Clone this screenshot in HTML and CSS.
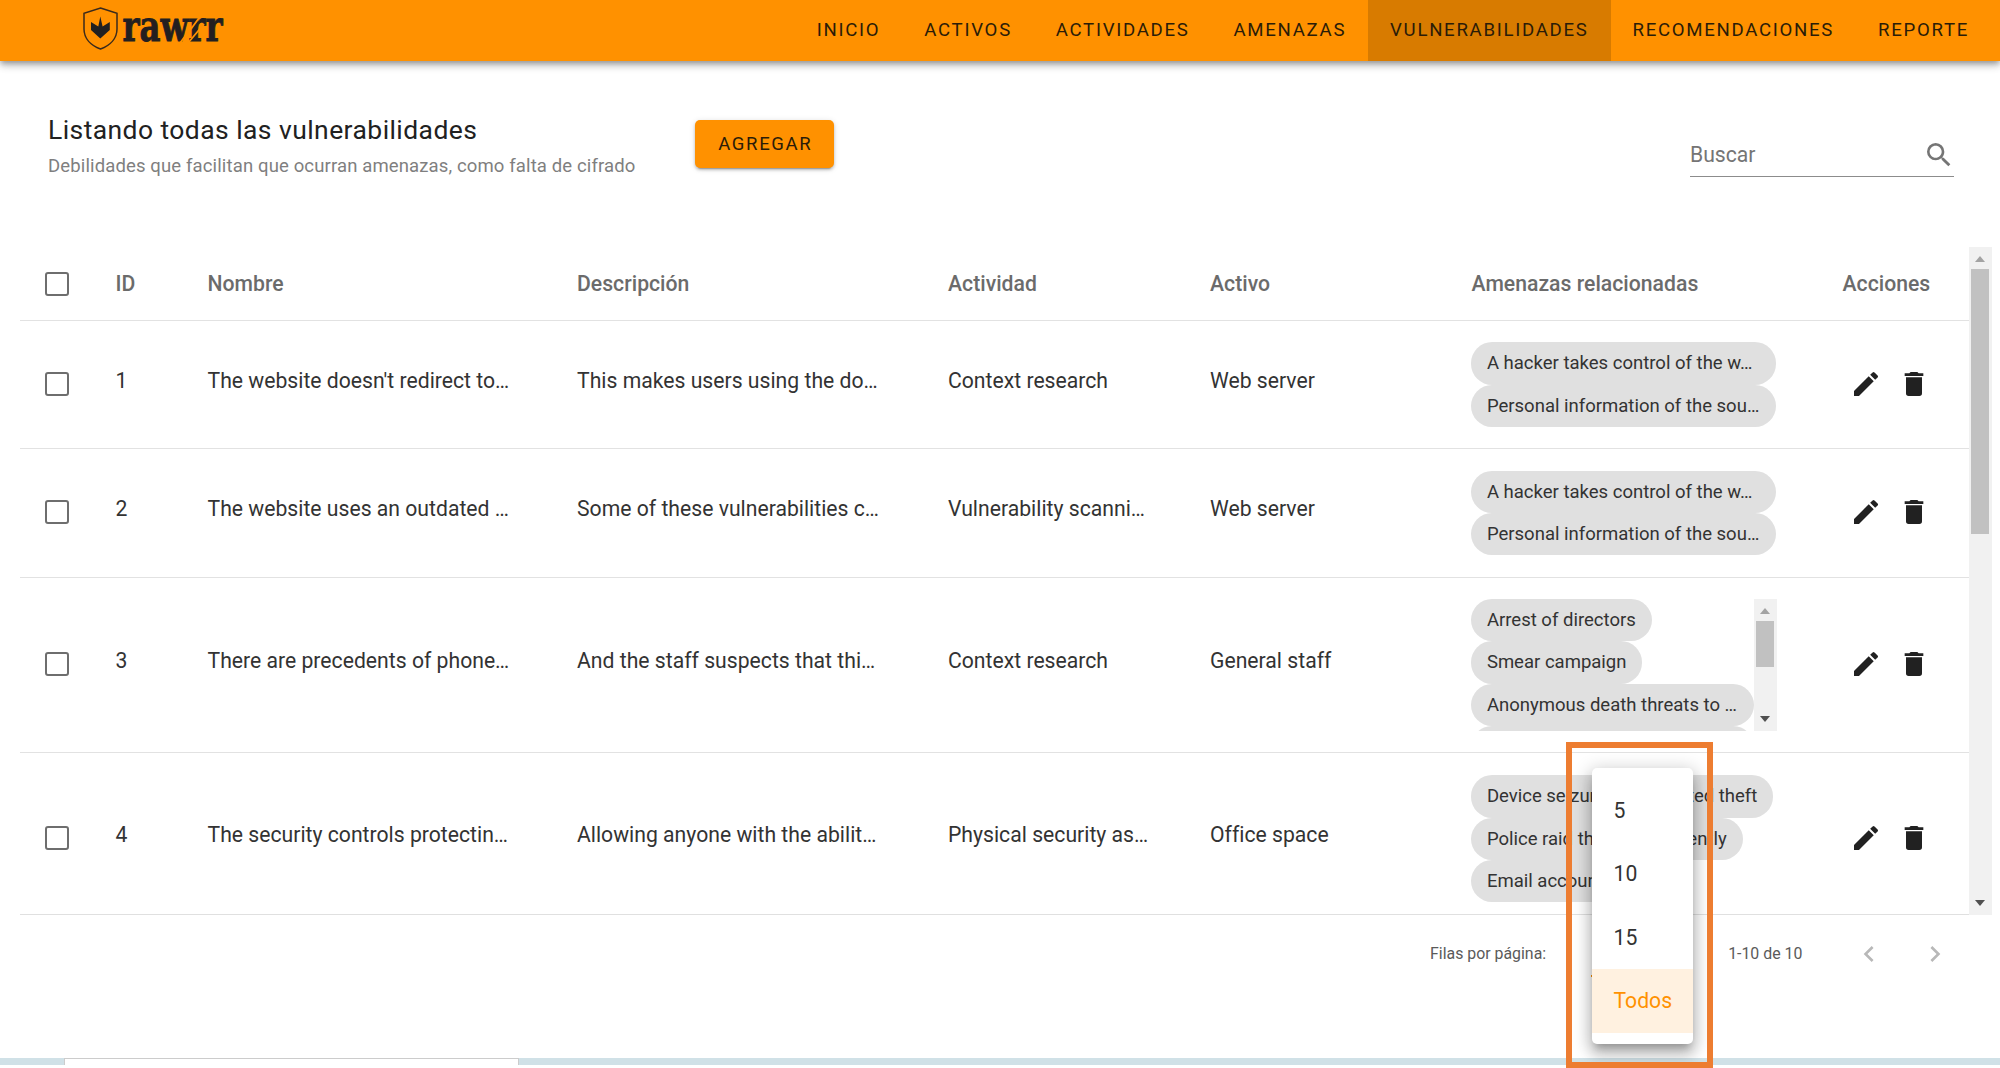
FILE: index.html
```html
<!DOCTYPE html>
<html lang="es">
<head>
<meta charset="utf-8">
<title>Vulnerabilidades</title>
<link rel="stylesheet" href="styles.css">
</head>
<body>
<svg class="defs" aria-hidden="true">
  <symbol id="pencil" viewBox="0 0 24 24"><path d="M3 17.25V21h3.75L17.81 9.94l-3.75-3.75L3 17.25zM20.71 7.04a1 1 0 0 0 0-1.41l-2.34-2.34a1 1 0 0 0-1.41 0l-1.83 1.83 3.75 3.75 1.83-1.83z"/></symbol>
  <symbol id="trash" viewBox="0 0 24 24"><path d="M19 4h-3.5l-1-1h-5l-1 1H5v2h14M6 19a2 2 0 0 0 2 2h8a2 2 0 0 0 2-2V7H6v12z"/></symbol>
  <symbol id="chevron" viewBox="0 0 24 24"><path d="M15.41 16.58L10.83 12l4.58-4.59L14 6l-6 6 6 6 1.41-1.42z"/></symbol>
</svg>
<header class="topbar">
  <svg class="logo" width="150" height="57" viewBox="0 -5 150 57" role="img" aria-label="rawrr">
    <path class="shield" d="M17.5 3L34 8.3V24C34 33.500 27 40.500 17.500 44C8 40.500 1 33.500 1 24V8.300Z"/>
    <path d="M17.300 11.500L19.600 21.500L26.800 17V25L17.300 33.500L8 25V17L15.300 21.500Z"/>
    <text class="wordmark" x="39.5" y="36" textLength="100" lengthAdjust="spacingAndGlyphs">rawrr</text>
    <path class="cut" d="M97 38L109 22M108 24L116 13M105 38L121 19"/>
  </svg>
  <nav class="menu">
    <a>INICIO</a><a>ACTIVOS</a><a>ACTIVIDADES</a><a>AMENAZAS</a><a class="active">VULNERABILIDADES</a><a>RECOMENDACIONES</a><a>REPORTE</a>
  </nav>
</header>
<main>
  <section class="toolbar">
    <div class="heading">
      <h1>Listando todas las vulnerabilidades</h1>
      <p>Debilidades que facilitan que ocurran amenazas, como falta de cifrado</p>
    </div>
    <button class="add">AGREGAR</button>
    <label class="search"><span>Buscar</span>
      <svg width="32" height="32" viewBox="0 0 24 24"><path d="M9.500 3A6.500 6.500 0 0 1 16 9.500c0 1.610-.59 3.090-1.560 4.230l.27.27h.79l5 5-1.500 1.500-5-5v-.79l-.27-.27A6.516 6.516 0 0 1 9.500 16a6.500 6.500 0 0 1 0-13m0 2C7 5 5 7 5 9.500S7 14 9.500 14 14 12 14 9.500 12 5 9.500 5z"/></svg>
    </label>
  </section>
  <section class="table-wrap">
    <div class="table">
      <div class="row head"><i class="check"></i><span>ID</span><span>Nombre</span><span>Descripción</span><span>Actividad</span><span>Activo</span><span>Amenazas relacionadas</span><span>Acciones</span></div>
      <div class="row"><i class="check"></i><span>1</span><span>The website doesn't redirect to…</span><span>This makes users using the do…</span><span>Context research</span><span>Web server</span>
        <div class="chips"><b class="full">A hacker takes control of the w…</b><b class="full">Personal information of the sou…</b></div>
        <div class="actions"><svg><use href="#pencil"/></svg><svg><use href="#trash"/></svg></div></div>
      <div class="row"><i class="check"></i><span>2</span><span>The website uses an outdated …</span><span>Some of these vulnerabilities c…</span><span>Vulnerability scanni…</span><span>Web server</span>
        <div class="chips"><b class="full">A hacker takes control of the w…</b><b class="full">Personal information of the sou…</b></div>
        <div class="actions"><svg><use href="#pencil"/></svg><svg><use href="#trash"/></svg></div></div>
      <div class="row tall"><i class="check"></i><span>3</span><span>There are precedents of phone…</span><span>And the staff suspects that thi…</span><span>Context research</span><span>General staff</span>
        <div class="scrollbox"><div class="chips"><b>Arrest of directors</b><b>Smear campaign</b><b class="full">Anonymous death threats to …</b><b class="full"></b></div>
          <div class="bar"><i class="up"></i><i class="thumb"></i><i class="down"></i></div></div>
        <div class="actions"><svg><use href="#pencil"/></svg><svg><use href="#trash"/></svg></div></div>
      <div class="row last"><i class="check"></i><span>4</span><span>The security controls protectin…</span><span>Allowing anyone with the abilit…</span><span>Physical security as…</span><span>Office space</span>
        <div class="chips"><b>Device seizure and targeted theft</b><b>Police raid the office violently</b><b class="email">Email accounts hacked</b></div>
        <div class="actions"><svg><use href="#pencil"/></svg><svg><use href="#trash"/></svg></div></div>
    </div>
    <div class="bar main-bar"><i class="up"></i><i class="thumb"></i><i class="down"></i></div>
  </section>
  <footer class="pager">
    <span>Filas por página:</span>
    <div class="select"></div>
    <span class="range">1-10 de 10</span>
    <svg><use href="#chevron"/></svg>
    <svg class="next"><use href="#chevron"/></svg>
  </footer>
</main>
<div class="taskbar"><div class="taskbar-box"></div></div>
<div class="options"><div>5</div><div>10</div><div>15</div><div class="selected">Todos</div></div>
<div class="highlight"></div>
</body>
</html>
```
FILE: styles.css
```css
* { box-sizing: border-box; }
body {
  margin: 0;
  width: 2000px;
  height: 1068px;
  overflow: hidden;
  position: relative;
  display: flex;
  flex-direction: column;
  background: #fff;
  color: #333;
  font: 21.17px/28px Roboto, sans-serif;
}
.defs { position: absolute; width: 0; height: 0; }
svg { fill: #212121; flex: none; }

.topbar {
  flex: none;
  height: 60.5px;
  padding: 0 9px 0 83px;
  display: flex;
  justify-content: space-between;
  background: #ff9100;
  box-shadow: 0 3px 5px -1px rgba(0,0,0,.25), 0 5px 7px rgba(0,0,0,.16), 0 1px 13px rgba(0,0,0,.12);
}
.shield { fill: none; stroke: #3a2a1c; stroke-width: 1.500px; }
.wordmark { font: bold 42px "DejaVu Serif", serif; fill: #231f20; stroke: #231f20; stroke-width: .9px; }
.cut { stroke: #ff9100; stroke-width: 1.8px; fill: none; }
.menu { display: flex; }
.menu a {
  padding: 0 22px 0 21.9px;
  font-size: 18.6px;
  line-height: 60px;
  letter-spacing: 1.720px;
  color: #2b1c08;
}
.menu .active { background: #d87b00; }

main { flex: none; height: 997.5px; }
.toolbar { height: 186.5px; display: flex; align-items: flex-start; padding: 0 46px 0 48px; }
.heading { width: 647px; padding-top: 51.5px; }
h1 { margin: 0; font-size: 26.46px; line-height: 36px; font-weight: 400; letter-spacing: .44px; color: #212121; }
p { margin: 3px 0 0; font-size: 18.52px; line-height: 30px; letter-spacing: .13px; color: #7f7f7f; white-space: nowrap; }
.add {
  width: 139px;
  height: 48px;
  margin-top: 59.5px;
  padding: 0 0 0 1.600px;
  border: 0;
  border-radius: 5px;
  background: #ff9100;
  box-shadow: 0 4px 1px -3px rgba(0,0,0,.2), 0 2px 3px rgba(0,0,0,.2), 0 1px 6px rgba(0,0,0,.12);
  color: #2b1c08;
  font: 18.52px Roboto, sans-serif;
  letter-spacing: 1.654px;
}
.search {
  width: 264px;
  height: 43px;
  margin: 73.5px 0 0 auto;
  display: flex;
  justify-content: space-between;
  border-bottom: 1px solid #8c8c8c;
  color: #757575;
  line-height: 41px;
}
.search svg { fill: #757575; margin: 5px -1px 0 0; }

.table-wrap { height: 667.5px; padding: 0 8px 0 20px; display: flex; }
.table { width: 1949px; height: 667.500px; overflow: hidden; border-bottom: 1.500px solid #e0e0e0; }
.row {
  height: 128.3px;
  display: grid;
  grid-template-columns: 95px 92px 369.500px 371px 262px 261.500px 371px 1fr;
  align-items: center;
  border-bottom: 1.500px solid #e2e2e2;
  white-space: nowrap;
}
.row > span { padding: 0 0 7px .5px; letter-spacing: .01px; }
.row > .check { margin: 0 0 2px 25px; }
.row.head { height: 74px; color: #6b6b6b; }
.row.head > span { padding-bottom: 0; font-weight: 500; letter-spacing: .03px; }
.row.head > .check { margin-bottom: 0; }
.row.tall { height: 175.600px; }
.row.last { height: 171px; border: 0; }
.check { width: 24px; height: 24px; border: 2.500px solid #6e6e6e; border-radius: 3px; }
.chips { display: flex; flex-direction: column; align-items: flex-start; width: 305px; }
.chips b {
  height: 42.33px;
  padding: 0 15.9px;
  border-radius: 21.2px;
  background: #e0e0e0;
  font-size: 18.52px;
  font-weight: 400;
  line-height: 43px;
}
.chips .full { width: 100%; }
.chips .email { width: 222px; }
.scrollbox { width: 305.500px; height: 132px; display: flex; overflow: hidden; }
.scrollbox .chips { width: 283px; flex: none; }
.scrollbox b { flex: none; }
.bar { width: 22.500px; background: #f1f1f1; display: flex; flex-direction: column; align-items: center; flex: none; }
.bar .up, .bar .down { width: 0; height: 0; border: 5px solid transparent; border-top: 0; border-bottom: 6px solid #a3a3a3; }
.bar .up { margin: 9px 0 7px; }
.bar .down { margin: auto 0 9px; border-top: 6px solid #505050; border-bottom: 0; }
.thumb { width: 18px; height: 46px; background: #c1c1c1; }
.main-bar .thumb { height: 265px; }
.actions { display: flex; gap: 15.500px; padding: 0 0 2px 8px; }
.actions svg { width: 32px; height: 32px; }

.pager { display: flex; align-items: center; height: 78px; padding-left: 1430px; font-size: 15.880px; color: #5a5a5a; }
.select { width: 101px; height: 30px; margin-left: 45px; align-self: flex-end; border-bottom: 2.500px solid #ff9100; margin-bottom: 16px; }
.range { margin-left: 36px; width: 125px; }
.pager svg { width: 32px; height: 32px; fill: #b8b8b8; }
.pager .next { transform: rotate(180deg); margin-left: 34px; }

.taskbar { height: 7px; background: #d0e1e7; padding-left: 64px; flex: none; }
.taskbar-box { width: 455px; height: 7px; background: #fff; border: 1px solid #ccc; border-bottom: 0; }

.options {
  position: absolute;
  left: 1592px;
  top: 768px;
  width: 101px;
  height: 276px;
  padding: 10.6px 0;
  border-radius: 5px;
  background: #fff;
  box-shadow: 0 7px 7px -4px rgba(0,0,0,.2), 0 11px 13px 1px rgba(0,0,0,.14), 0 4px 18px 3px rgba(0,0,0,.2);
}
.options div { height: 63.5px; padding-left: 21.5px; line-height: 64.500px; }
.options .selected { background: #fff1e0; color: #ff9100; }
.highlight { position: absolute; left: 1566px; top: 742px; width: 147px; height: 326px; border: 6px solid #ed7d31; }
```
